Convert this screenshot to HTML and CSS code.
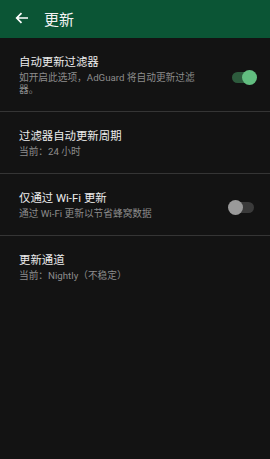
FILE: index.html
```html
<!DOCTYPE html>
<html lang="zh-CN">
<head>
    <meta charset="UTF-8">
    <meta name="viewport" content="width=device-width, initial-scale=1.0">
    <title>更新</title>
    <link rel="stylesheet" href="styles.css">
</head>
<body>
    <div class="header">
        <svg class="back" width="14" height="12" viewBox="0 0 14 12">
            <path d="M13 6H2M6.5 1.2L1.7 6l4.8 4.8" fill="none" stroke="#fff" stroke-width="1.7"/>
        </svg>
        <div class="title">更新</div>
    </div>
    <div class="list">
        <div class="row">
            <div class="text">
                <div class="name">自动更新过滤器</div>
                <div class="desc">如开启此选项，AdGuard 将自动更新过滤器。</div>
            </div>
            <div class="switch on"><span class="thumb"></span></div>
        </div>
        <div class="row">
            <div class="text">
                <div class="name">过滤器自动更新周期</div>
                <div class="desc">当前：24 小时</div>
            </div>
        </div>
        <div class="row">
            <div class="text">
                <div class="name">仅通过 Wi-Fi 更新</div>
                <div class="desc">通过 Wi-Fi 更新以节省蜂窝数据</div>
            </div>
            <div class="switch"><span class="thumb"></span></div>
        </div>
        <div class="row last">
            <div class="text">
                <div class="name">更新通道</div>
                <div class="desc">当前：Nightly（不稳定）</div>
            </div>
        </div>
    </div>
</body>
</html>
```

FILE: styles.css
```css
*{
    padding: 0;
    margin: 0;
    box-sizing: border-box;
}
body{
    width: 270px;
    height: 459px;
    background: #131313;
    font-family: Roboto, "Noto Sans CJK SC", sans-serif;
    color: #ececec;
}
.header{
    height: 38px;
    background: #0b5535;
    display: flex;
    align-items: center;
    padding-left: 15px;
}
.back{
    display: block;
    margin-top: -2px;
}
.title{
    margin-left: 15px;
    font-size: 15px;
    margin-top: -1px;
    color: #f2f2f2;
}
.row{
    display: flex;
    align-items: center;
    padding: 16px 16px 15px 19px;
    border-bottom: 1px solid #353535;
}
.row.last{
    border-bottom: none;
}
.text{
    flex: 1;
}
.name{
    font-size: 11.4px;
    line-height: 16px;
}
.desc{
    margin-top: 2px;
    font-size: 9.7px;
    line-height: 12px;
    color: #8d8d8d;
    max-width: 182px;
}
.switch{
    position: relative;
    width: 22px;
    height: 11px;
    border-radius: 6px;
    background: #3a3a3a;
    margin-left: 10px;
    margin-top: 4px;
}
.switch .thumb{
    position: absolute;
    top: -2px;
    left: -4px;
    width: 15px;
    height: 15px;
    border-radius: 50%;
    background: #9a9a9a;
}
.switch.on{
    background: #2d5b3d;
}
.switch.on .thumb{
    left: 10px;
    background: #62be80;
}
```
